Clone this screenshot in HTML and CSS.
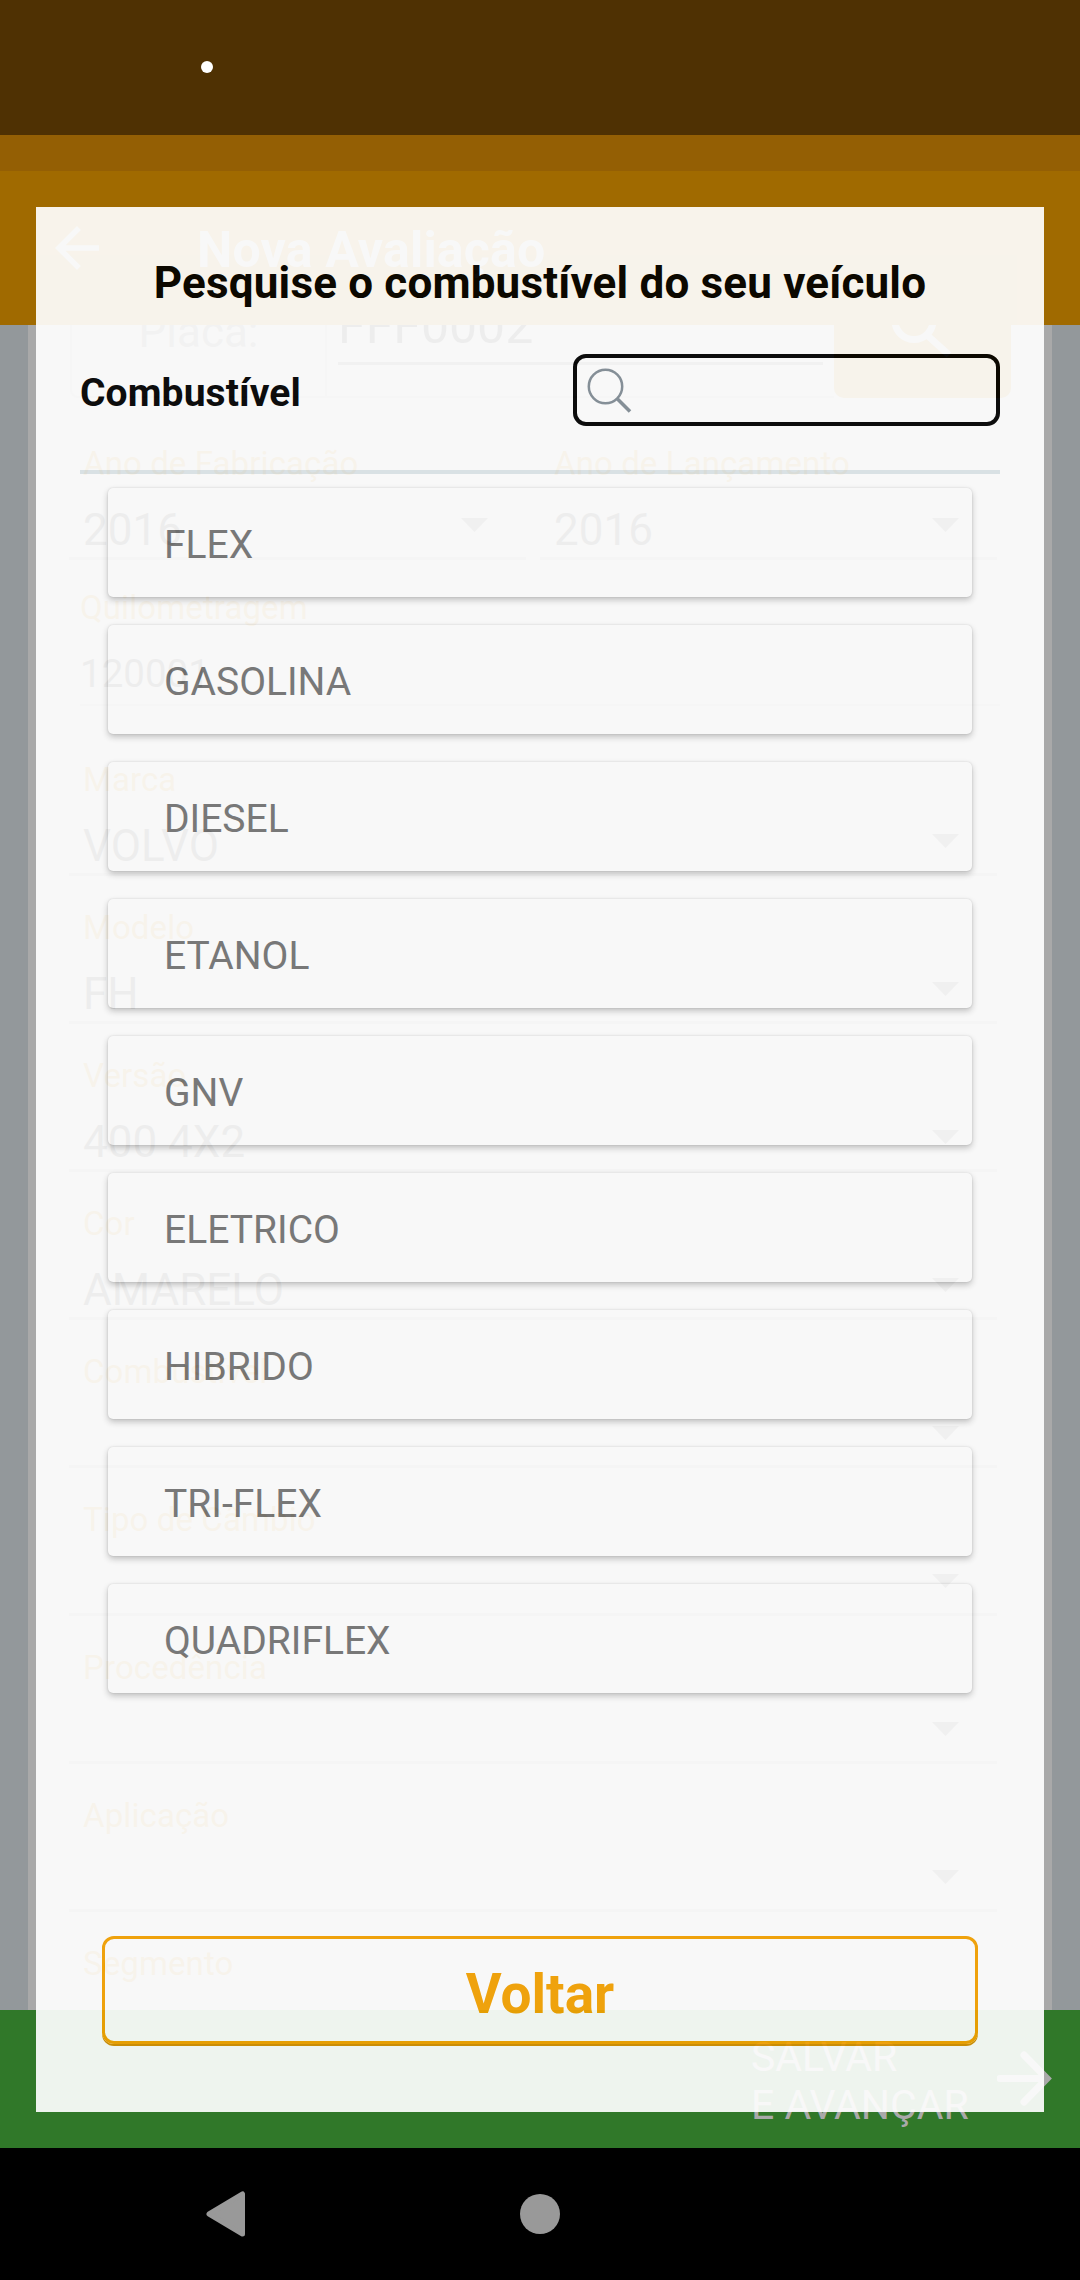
FILE: index.html
```html
<!DOCTYPE html>
<html lang="pt-BR">
<head>
<meta charset="utf-8">
<title>Nova Avaliação</title>
<link rel="stylesheet" href="styles.css">
</head>
<body>
<div class="screen">
  <div class="status"><span class="status-dot"></span></div>
  <div class="status-strip"></div>
  <header class="appbar">
    <svg class="appbar-back" viewBox="0 0 24 24"><path d="M20 11H7.83l5.59-5.59L12 4l-8 8 8 8 1.41-1.41L7.83 13H20z"/></svg>
    <h1 class="appbar-title">Nova Avaliação</h1>
  </header>

  <main class="page">
    <form class="form">
      <div class="plate">
        <div class="plate-label">Placa:</div>
        <div class="plate-field"><div class="plate-value">FFF0002</div></div>
        <div class="plate-search">
          <svg class="plate-icon" viewBox="0 0 60 60"><circle cx="23" cy="22.6" r="19"/><path d="M37 38L58 57"/></svg>
        </div>
      </div>
      <div class="years">
        <div class="field"><div class="label">Ano de Fabricação</div><div class="select"><span>2016</span><i class="caret"></i></div></div>
        <div class="field"><div class="label">Ano de Lançamento</div><div class="select"><span>2016</span><i class="caret"></i></div></div>
      </div>
      <div class="km"><div class="label">Quilometragem</div><div class="km-value">120001</div></div>
      <div class="field"><div class="label">Marca</div><div class="select"><span>VOLVO</span><i class="caret"></i></div></div>
      <div class="field"><div class="label">Modelo</div><div class="select"><span>FH</span><i class="caret"></i></div></div>
      <div class="field"><div class="label">Versão</div><div class="select"><span>400 4X2</span><i class="caret"></i></div></div>
      <div class="field"><div class="label">Cor</div><div class="select"><span>AMARELO</span><i class="caret"></i></div></div>
      <div class="field"><div class="label">Combustível</div><div class="select"><span></span><i class="caret"></i></div></div>
      <div class="field"><div class="label">Tipo de Câmbio</div><div class="select"><span></span><i class="caret"></i></div></div>
      <div class="field"><div class="label">Procedência</div><div class="select"><span></span><i class="caret"></i></div></div>
      <div class="field"><div class="label">Aplicação</div><div class="select"><span></span><i class="caret"></i></div></div>
      <div class="field field-last"><div class="label">Segmento</div></div>
    </form>
  </main>

  <footer class="save">
    <div class="save-text">SALVAR<br>E AVANÇAR</div>
    <svg class="save-arrow" viewBox="0 0 55 55"><path d="M3 27.5H49M27 4L50 27.5L27 51"/></svg>
  </footer>

  <nav class="nav">
    <svg class="nav-back" viewBox="0 0 40 46"><path d="M36.5 3V43L3 23Z"/></svg>
    <span class="nav-home"></span>
  </nav>

  <section class="modal">
    <h2 class="modal-title">Pesquise o combustível do seu veículo</h2>
    <div class="search-row">
      <div class="search-label">Combustível</div>
      <div class="search-box">
        <svg class="search-icon" viewBox="0 0 46 46"><circle cx="18.5" cy="18.5" r="16.7"/><path class="handle" d="M30.5 31L43 43.5"/></svg>
      </div>
    </div>
    <div class="options">
      <div class="option">FLEX</div>
      <div class="option">GASOLINA</div>
      <div class="option">DIESEL</div>
      <div class="option">ETANOL</div>
      <div class="option">GNV</div>
      <div class="option">ELETRICO</div>
      <div class="option">HIBRIDO</div>
      <div class="option">TRI-FLEX</div>
      <div class="option">QUADRIFLEX</div>
    </div>
    <div class="back-button">Voltar</div>
  </section>
</div>
</body>
</html>
```
FILE: styles.css
```css
* { box-sizing: border-box; }
body { margin: 0; background: #000; font-family: Roboto, sans-serif; }
h1, h2 { margin: 0; }
svg { display: block; flex: none; }

.screen { position: relative; display: flex; flex-direction: column; width: 1080px; height: 2280px; overflow: hidden; }

.status { height: 135px; padding: 61px 0 0 201px; background: #4f3103; }
.status-dot { display: block; width: 12px; height: 12px; border-radius: 50%; background: #fff; }
.status-strip { height: 36px; background: #945f04; }
.appbar { display: flex; align-items: center; height: 154px; padding: 0 44px; background: #a06a00; }
.appbar-back { width: 66px; height: 66px; fill: #a9a9a9; }
.appbar-title { margin: 3px 0 0 87px; font-size: 50px; line-height: 60px; letter-spacing: .2px; font-weight: 700; color: #a9a9a9; }

.page { height: 1685px; padding: 0 28px; background: #93989b; overflow: hidden; }
.form { height: 1685px; padding: 0 55px 0 41px; background: #a9a9a9; overflow: hidden; }

.plate { display: flex; align-items: flex-end; width: 941px; height: 73px; margin-left: 1px; overflow: hidden; }
.plate-label { width: 257px; height: 120px; padding-top: 26px; border: 2px solid #919191; border-radius: 8px 0 0 8px; text-align: center; font-size: 44px; line-height: 52px; color: #5c5c5c; }
.plate-field { flex: 1; height: 120px; padding: 18px 11px 0; border-bottom: 2px solid #919191; }
.plate-value { height: 69px; border-bottom: 3px solid #505050; font-size: 50px; line-height: 60px; color: #202020; }
.plate-search { width: 177px; height: 130px; padding: 30px 0 0 57px; background: #a06a00; border-radius: 10px; }
.plate-icon { width: 60px; height: 60px; fill: none; stroke: #a9a9a9; stroke-width: 7; }

.years { display: grid; grid-template-columns: 457px 457px; gap: 14px; margin-top: 14px; }
.field { height: 148px; padding-top: 32px; border-bottom: 3px solid #828282; }
.field-last { border: 0; }
.label { padding-left: 14px; font-size: 33px; line-height: 40px; letter-spacing: .1px; color: #a06a00; }
.select { display: flex; justify-content: space-between; height: 52px; margin-top: 20px; padding: 0 38px 0 14px; font-size: 44px; line-height: 52px; color: #202020; }
.caret { width: 27px; height: 14px; margin-top: 14px; background: #454545; clip-path: polygon(0 0, 100% 0, 50% 100%); }
.km { height: 146px; width: 920px; margin: 0 0 22px 11px; padding-top: 28px; border-bottom: 2px solid #8c8c8c; }
.km .label { padding-left: 0; }
.km-value { margin-top: 23px; font-size: 38.5px; line-height: 46px; color: #202020; }

.save { display: flex; justify-content: flex-end; height: 138px; padding: 23px 28px 0 0; background: #307829; }
.save-text { width: 246px; font-size: 41px; line-height: 48px; color: #a9a9a9; white-space: nowrap; }
.save-arrow { width: 55px; height: 55px; margin-top: 18px; fill: none; stroke: #a9a9a9; stroke-width: 7; stroke-linecap: round; }

.nav { display: flex; align-items: center; height: 132px; padding-left: 206px; background: #000; }
.nav-back { width: 40px; height: 46px; fill: #999; stroke: #999; stroke-width: 5; stroke-linejoin: round; }
.nav-home { width: 40px; height: 40px; margin-left: 274px; border-radius: 50%; background: #999; }

/* Translucent picker dialog covering the form */
.modal { position: absolute; left: 36px; top: 207px; display: flex; flex-direction: column; width: 1008px; height: 1905px; padding: 50px 44px 68px; background: #fff; opacity: .92; }
.modal-title { font-size: 44px; line-height: 52px; letter-spacing: .17px; font-weight: 700; text-align: center; color: #000; white-space: nowrap; }
.search-row { display: flex; justify-content: space-between; height: 120px; margin-top: 45px; border-bottom: 4px solid #dee6ea; }
.search-label { padding-top: 16px; font-size: 39px; line-height: 46px; letter-spacing: .1px; font-weight: 700; color: #000; }
.search-box { width: 427px; height: 72px; padding: 10px; border: 4px solid #000; border-radius: 13px; }
.search-icon { width: 46px; height: 46px; fill: none; stroke: #828d96; stroke-width: 2.5; }
.search-icon .handle { stroke-width: 3.5; }
.options { display: flex; flex-direction: column; gap: 28px; margin: 14px 28px 0; }
.option { height: 109px; padding: 34px 56px 0; border-radius: 5px; background: #fff; box-shadow: 0 3px 6px rgba(0,0,0,.24), 0 0 2px rgba(0,0,0,.14); font-size: 39px; line-height: 46px; color: #747474; }
.back-button { height: 108px; margin: auto 22px 0; padding-top: 23px; border: 3px solid #f5a200; border-radius: 12px; box-shadow: 0 2px 0 #d68f04; text-align: center; font-size: 55px; line-height: 64px; font-weight: 700; color: #f5a200; }
```
